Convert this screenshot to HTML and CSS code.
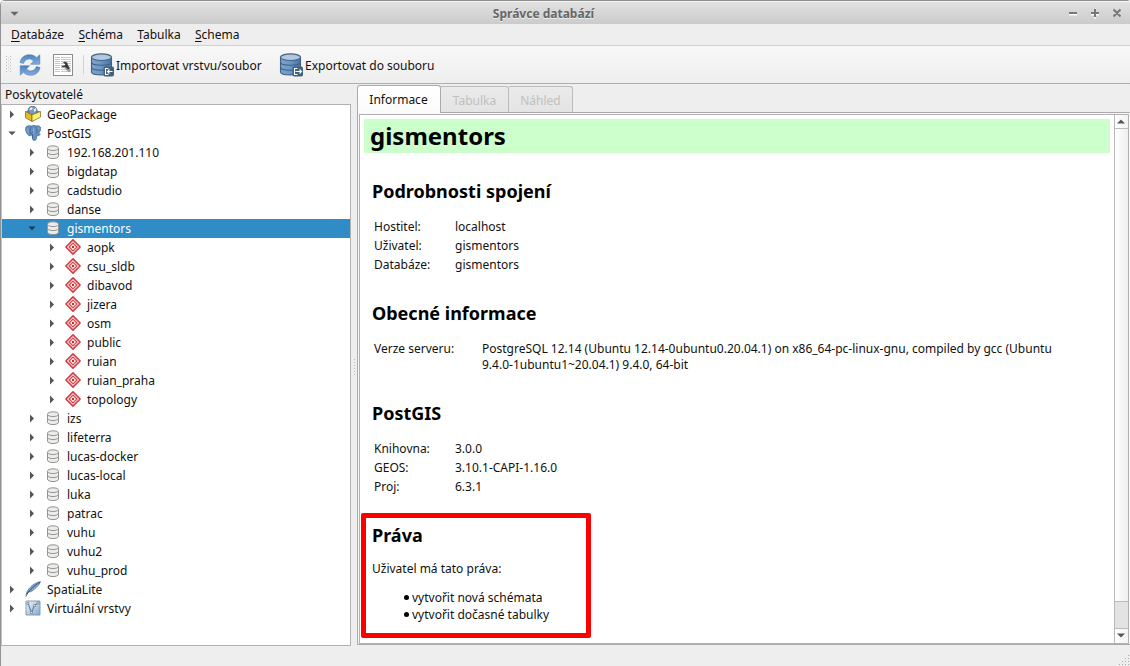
FILE: index.html
```html
<!DOCTYPE html>
<html lang="cs">
<head>
<meta charset="utf-8">
<title>Správce databází</title>
<link rel="stylesheet" href="styles.css">
</head>
<body>
<svg class="defs" width="0" height="0" aria-hidden="true">
  <defs>
    <linearGradient id="blue" x1="0" x2="1" y1="0" y2="0"><stop offset="0" stop-color="#7ba3d0"/><stop offset=".45" stop-color="#6d98c8"/><stop offset="1" stop-color="#4473a9"/></linearGradient>
    <linearGradient id="sync" x1="0" x2="0" y1="0" y2="1"><stop offset="0" stop-color="#4b82bd"/><stop offset="1" stop-color="#85aedb"/></linearGradient>
    <linearGradient id="virt" x1="0" x2="1" y1="0" y2="1"><stop offset="0" stop-color="#f2f6fa"/><stop offset="1" stop-color="#83a9ce"/></linearGradient>
  </defs>
  <symbol id="right" viewBox="0 0 8 9"><path d="M2 .5 6 4.5 2 8.5Z" fill="#555"/></symbol>
  <symbol id="down" viewBox="0 0 8 9"><path d="M.3 2.5h7.4L4 6.3Z" fill="currentColor"/></symbol>
  <symbol id="db" viewBox="0 0 16 16"><path d="M2.500 4.300c0-3.300 11-3.300 11 0v7.800c0 3.300-11 3.300-11 0Z" fill="#ececea" stroke="#939391"/><path d="M2.500 4.600c1 2.600 10 2.600 11 0M2.500 8.600c1 2.600 10 2.600 11 0" fill="none" stroke="#939391"/></symbol>
  <symbol id="schema" viewBox="0 0 16 16"><path d="M8 .9 15.100 8 8 15.100 .9 8Z" fill="#fbe9e9" stroke="#d23f43" stroke-width="1.600" stroke-linejoin="round"/><path d="M8 4.100 11.900 8 8 11.900 4.100 8Z" fill="#fff" stroke="#d7494d" stroke-width="1.300" stroke-linejoin="round"/><circle cx="8" cy="8" r="1.200" fill="#c9262c"/></symbol>
  <symbol id="gpkg" viewBox="0 0 16 16"><path d="M.5 5.500 8 3l7.500 2.500L7 9Z" fill="#a98f22"/><circle cx="7.500" cy="4.800" r="4.500" fill="#7598c0" stroke="#41566e" stroke-width=".7"/><path d="M4 3.500 6 1.200 8 2 6.300 4.300ZM8.400 3.700l2.300-1.600.7 2-1.600 2Z" fill="#e8eef1"/><path d="M.5 5.500 7 8.800v6.700L.5 11.800Z" fill="#e2bd21" stroke="#75631c" stroke-width=".7"/><path d="m7 8.800 8.500-3.300v5.600L7 15.500Z" fill="#fff06c" stroke="#75631c" stroke-width=".7"/></symbol>
  <symbol id="elephant" viewBox="0 0 16 16"><path d="M1 2C3 .2 5 1 6.300 1c2-.8 3.600-.6 5 0 2-.7 4.500.2 4.400 2.400-.1 2-1.500 4.400-2.400 5.700l2 .1c-.5 1.200-2 1.500-3.500 1.400-.3 2.200.1 4.600-2.300 4.800-2.200.1-2-2-2.200-4.500L6 9.700 5 11C2.700 10.800.5 6.500.6 4Z" fill="#6991be" stroke="#456d9a" stroke-width=".8"/><path d="M6 2C4.700 4 5.300 6.500 5 8.300 6.300 9 7.500 8 7.400 6.500M10.800 2c2 2 1.200 4.500.5 6.500M7.500 9v4" fill="none" stroke="#335a85" stroke-width=".7"/><path d="M8.500 3.300v5M2.300 3.500l1 4M12.700 2.500l1 2" stroke="#94b5d8" stroke-width=".8"/></symbol>
  <symbol id="feather" viewBox="0 0 16 16"><path d="M1.200 13.500C2 8.500 8 2 15.500.7 14 4 12 6 10 7.500 8 9.800 6 11 3.500 11Z" fill="#82aad3" stroke="#456585" stroke-width=".7"/><path d="M.8 15.500C3 10.500 8 5.500 15 1" fill="none" stroke="#2d4864" stroke-width=".9"/></symbol>
  <symbol id="virtual" viewBox="0 0 16 16"><path d="M1 1h14v14H1Z" fill="url(#virt)" stroke="#7795b4" stroke-width=".9"/><path d="M3 3.500 6.500 12.500 9.500 5.500 13 3" fill="none" stroke="#4c6277" stroke-width=".9"/><path d="M2 2.300h2v2H2zM5.500 11.500h2v2h-2zM8.500 4.500h2v2h-2zM12 2h2v2h-2z" fill="#e8edf0" stroke="#4c6277" stroke-width=".5"/></symbol>
  <symbol id="bigdb" viewBox="0 0 24 24"><path d="M1.500 4.200v14.800c0 4 20 4 20 0V4.200Z" fill="url(#blue)" stroke="#41617f" stroke-width="1.100"/><ellipse cx="11.500" cy="4.200" rx="10" ry="3.300" fill="#b3c8e0" stroke="#41617f" stroke-width="1.100"/><path d="M1.500 9.200c0 4 20 4 20 0M1.500 14.200c0 4 20 4 20 0" fill="none" stroke="#41617f" stroke-width="1.100"/><rect x="13.500" y="13.500" width="10.500" height="10" rx="1.800" fill="#41617a"/></symbol>
</svg>

<div class="window">
  <header class="titlebar">
    <svg class="window-menu" viewBox="0 0 9 6"><path d="M.5.8h8L4.500 4.800Z" fill="#666"/></svg>
    <span class="title">Správce databází</span>
    <svg class="window-buttons" viewBox="0 0 54 12"><g fill="none" stroke="#fafafa" stroke-width="2"><path d="M1 7.500h8M23 7.500h8M27 3.500v8"/></g><g fill="none" stroke="#777" stroke-width="2"><path d="M1 6h8M23 6h8M27 2v8M45.500 2.500l7 7M52.500 2.500l-7 7"/></g></svg>
  </header>

  <nav class="menubar">
    <span><u>D</u>atabáze</span><span><u>S</u>chéma</span><span><u>T</u>abulka</span><span><u>S</u>chema</span>
  </nav>

  <div class="toolbar">
    <svg class="grip" viewBox="0 0 5 17"><path d="M.5 0v17M4.500 0v17" stroke="#bbb" stroke-dasharray="1 2" fill="none"/><path d="M2.500 1.500v15" stroke="#ccc" stroke-dasharray="1 2" fill="none"/></svg>
    <svg class="refresh" viewBox="0 0 22 22"><g fill="url(#sync)" stroke="#4377b0" stroke-width=".5"><path d="M1 8.500C2 3 6 .7 10.500.7c3.500 0 5.500 1.300 7 3L20.800.8v9.500h-9.300l3-3.200C11 3.500 6 5 4.500 9.500Z"/><path d="M21 13.500c-1 5.500-5 7.800-9.500 7.800-3.500 0-5.500-1.300-7-3l-3.300 2.900v-9.500h9.300l-3 3.200c3.500 3.600 8.500 2.100 10-2.400Z"/></g></svg>
    <svg class="sql" viewBox="0 0 20 22"><rect x=".5" y=".5" width="19" height="21" fill="#fff" stroke="#8c8c8c"/><path d="M2 3.500h5M8 3.500h10M2 5.500h5M8 5.500h10M2 7.500h5M8 7.500h10M2 9.500h5M8 9.500h10M2 11.500h5M8 11.500h10M2 13.500h5M8 13.500h10M2 15.500h5M8 15.500h10M2 17.500h5M8 17.500h10" stroke="#c7c7c7"/><path d="M12.500 13.500 17 17.500" stroke="#999" stroke-width="2.500"/><path d="M10 8.300c2-1.300 5-.1 4.800 2.400l2.200 3.800-2 .8-2.700-2.200c-1.800.6-3.500.2-4-1.300h3l1-1.600Z" fill="#3b3b3b"/></svg>
    <i class="separator"></i>
    <div class="tool import">
      <svg viewBox="0 0 24 24"><use href="#bigdb"/><path d="M18.500 15.500h-3v6h3M22.500 18.500h-5M19.500 16.500l-2 2 2 2" fill="none" stroke="#fff" stroke-width="1.100"/></svg>
      <span>Importovat vrstvu/soubor</span>
    </div>
    <div class="tool export">
      <svg viewBox="0 0 24 24"><use href="#bigdb"/><path d="M18.500 15.500h-3v6h3M16.500 18.500h6M20.500 16.500l2 2-2 2" fill="none" stroke="#fff" stroke-width="1.100"/></svg>
      <span>Exportovat do souboru</span>
    </div>
  </div>

  <main class="workspace">
    <section class="providers">
      <div class="panel-title">Poskytovatelé</div>
      <div class="tree">
        <div class="row"><svg class="arrow"><use href="#right"/></svg><svg class="icon"><use href="#gpkg"/></svg><span>GeoPackage</span></div>
        <div class="row"><svg class="arrow"><use href="#down"/></svg><svg class="icon"><use href="#elephant"/></svg><span>PostGIS</span></div>
        <div class="row connection"><svg class="arrow"><use href="#right"/></svg><svg class="icon"><use href="#db"/></svg><span>192.168.201.110</span></div>
        <div class="row connection"><svg class="arrow"><use href="#right"/></svg><svg class="icon"><use href="#db"/></svg><span>bigdatap</span></div>
        <div class="row connection"><svg class="arrow"><use href="#right"/></svg><svg class="icon"><use href="#db"/></svg><span>cadstudio</span></div>
        <div class="row connection"><svg class="arrow"><use href="#right"/></svg><svg class="icon"><use href="#db"/></svg><span>danse</span></div>
        <div class="row connection selected"><svg class="arrow"><use href="#down"/></svg><svg class="icon"><use href="#db"/></svg><span>gismentors</span></div>
        <div class="row schema"><svg class="arrow"><use href="#right"/></svg><svg class="icon"><use href="#schema"/></svg><span>aopk</span></div>
        <div class="row schema"><svg class="arrow"><use href="#right"/></svg><svg class="icon"><use href="#schema"/></svg><span>csu_sldb</span></div>
        <div class="row schema"><svg class="arrow"><use href="#right"/></svg><svg class="icon"><use href="#schema"/></svg><span>dibavod</span></div>
        <div class="row schema"><svg class="arrow"><use href="#right"/></svg><svg class="icon"><use href="#schema"/></svg><span>jizera</span></div>
        <div class="row schema"><svg class="arrow"><use href="#right"/></svg><svg class="icon"><use href="#schema"/></svg><span>osm</span></div>
        <div class="row schema"><svg class="arrow"><use href="#right"/></svg><svg class="icon"><use href="#schema"/></svg><span>public</span></div>
        <div class="row schema"><svg class="arrow"><use href="#right"/></svg><svg class="icon"><use href="#schema"/></svg><span>ruian</span></div>
        <div class="row schema"><svg class="arrow"><use href="#right"/></svg><svg class="icon"><use href="#schema"/></svg><span>ruian_praha</span></div>
        <div class="row schema"><svg class="arrow"><use href="#right"/></svg><svg class="icon"><use href="#schema"/></svg><span>topology</span></div>
        <div class="row connection"><svg class="arrow"><use href="#right"/></svg><svg class="icon"><use href="#db"/></svg><span>izs</span></div>
        <div class="row connection"><svg class="arrow"><use href="#right"/></svg><svg class="icon"><use href="#db"/></svg><span>lifeterra</span></div>
        <div class="row connection"><svg class="arrow"><use href="#right"/></svg><svg class="icon"><use href="#db"/></svg><span>lucas-docker</span></div>
        <div class="row connection"><svg class="arrow"><use href="#right"/></svg><svg class="icon"><use href="#db"/></svg><span>lucas-local</span></div>
        <div class="row connection"><svg class="arrow"><use href="#right"/></svg><svg class="icon"><use href="#db"/></svg><span>luka</span></div>
        <div class="row connection"><svg class="arrow"><use href="#right"/></svg><svg class="icon"><use href="#db"/></svg><span>patrac</span></div>
        <div class="row connection"><svg class="arrow"><use href="#right"/></svg><svg class="icon"><use href="#db"/></svg><span>vuhu</span></div>
        <div class="row connection"><svg class="arrow"><use href="#right"/></svg><svg class="icon"><use href="#db"/></svg><span>vuhu2</span></div>
        <div class="row connection"><svg class="arrow"><use href="#right"/></svg><svg class="icon"><use href="#db"/></svg><span>vuhu_prod</span></div>
        <div class="row"><svg class="arrow"><use href="#right"/></svg><svg class="icon"><use href="#feather"/></svg><span>SpatiaLite</span></div>
        <div class="row"><svg class="arrow"><use href="#right"/></svg><svg class="icon"><use href="#virtual"/></svg><span>Virtuální vrstvy</span></div>
      </div>
    </section>

    <div class="splitter"><i></i></div>

    <section class="details">
      <div class="tabs">
        <div class="tab active">Informace</div><div class="tab">Tabulka</div><div class="tab last">Náhled</div>
      </div>
      <div class="pane">
        <div class="browser">
          <article class="info">
            <h1>gismentors</h1>
            <h2>Podrobnosti spojení</h2>
            <dl class="connection-info">
              <dt>Hostitel:</dt><dd>localhost</dd>
              <dt>Uživatel:</dt><dd>gismentors</dd>
              <dt>Databáze:</dt><dd>gismentors</dd>
            </dl>
            <h2>Obecné informace</h2>
            <dl class="server-info">
              <dt>Verze serveru:</dt><dd>PostgreSQL 12.14 (Ubuntu 12.14-0ubuntu0.20.04.1) on x86_64-pc-linux-gnu, compiled by gcc (Ubuntu<br>9.4.0-1ubuntu1~20.04.1) 9.4.0, 64-bit</dd>
            </dl>
            <h2>PostGIS</h2>
            <dl class="postgis-info">
              <dt>Knihovna:</dt><dd>3.0.0</dd>
              <dt>GEOS:</dt><dd>3.10.1-CAPI-1.16.0</dd>
              <dt>Proj:</dt><dd>6.3.1</dd>
            </dl>
            <h2>Práva</h2>
            <p>Uživatel má tato práva:</p>
            <ul><li>vytvořit nová schémata</li><li>vytvořit dočasné tabulky</li></ul>
            <div class="highlight"></div>
          </article>
          <div class="scrollbar">
            <div class="scroll-button"><svg viewBox="0 0 8 5"><path d="M0 4.500h8L4 .5Z" fill="#555"/></svg></div>
            <div class="track"></div>
            <div class="thumb"></div>
            <div class="scroll-button bottom"><svg viewBox="0 0 8 5"><path d="M0 .5h8L4 4.500Z" fill="#555"/></svg></div>
          </div>
        </div>
      </div>
    </section>
  </main>

  <footer class="statusbar">
    <svg class="resize" viewBox="0 0 12 12"><path d="M10 1h1v1h-1zM7 4h1v1H7zM10 4h1v1h-1zM4 7h1v1H4zM7 7h1v1H7zM10 7h1v1h-1zM1 10h1v1H1zM4 10h1v1H4zM7 10h1v1H7zM10 10h1v1h-1z" fill="#aaa"/></svg>
  </footer>
</div>
</body>
</html>
```

FILE: styles.css
```css
* { box-sizing: border-box; }
body { margin: 0; background: #fff; }
.defs { display: block; height: 0; }
svg { flex: none; }

.window {
  width: 1130px;
  height: 666px;
  display: flex;
  flex-direction: column;
  overflow: hidden;
  background: #eee;
  border-left: 1px solid #929292;
  border-top-left-radius: 5px;
  border-top-right-radius: 3px;
  font: 12px/19px "Noto Sans", sans-serif;
  color: #111;
}

.titlebar {
  height: 24px;
  flex: none;
  display: grid;
  grid-template-columns: 36px 1fr 80px;
  align-items: center;
  border-top: 1px solid #8f8f8f;
  box-shadow: inset 0 1px #f4f4f4;
  background: linear-gradient(#e2e2e2, #cbcbcb);
}
.window-menu { width: 9px; height: 6px; margin: 2px 0 0 9px; }
.title { padding-top: 2px; text-align: center; font-weight: 700; color: #666; text-shadow: 0 1px #eee; }
.window-buttons { width: 54px; height: 12px; margin: 1px 0 0 18px; }

.menubar {
  height: 21px;
  flex: none;
  display: flex;
  gap: 14.3px;
  padding: 1px 0 0 10px;
}
.menubar u { text-underline-offset: 2px; }

.toolbar {
  height: 39px;
  flex: none;
  display: flex;
  align-items: center;
  border-top: 1px solid #d0d0d0;
  border-bottom: 1px solid #adadad;
  background: linear-gradient(#f8f8f8, #eee);
}
.grip { width: 5px; height: 17px; margin-left: 5px; }
.refresh { width: 22px; height: 22px; margin-left: 8px; }
.sql { width: 20px; height: 22px; margin-left: 12px; }
.separator { width: 1px; height: 19px; margin-left: 10px; background: #d2d2d2; }
.tool { display: flex; align-items: center; }
.tool svg { width: 24px; height: 24px; }
.import { width: 189px; margin-left: 6px; }
.tool span { margin-left: 2px; padding-top: 1px; }

.workspace { flex: none; height: 562px; display: flex; }
.providers { width: 350px; padding-top: 1px; display: flex; flex-direction: column; }
.panel-title { height: 19px; padding-left: 4px; }
.tree { height: 542px; border: 1px solid #b1b1b1; border-left-color: #c4c4c4; background: #fff; }
.row { height: 19px; display: flex; align-items: center; padding-left: 6px; }
.row.connection { padding-left: 26px; }
.row.schema { padding-left: 46px; }
.arrow { width: 8px; height: 9px; color: #555; }
.icon { width: 16px; height: 16px; margin: 0 6px 1px 9px; }
.row.selected { background: #308cc6; color: #fff; }
.selected .arrow { color: #173b54; }

.splitter { width: 6px; flex: none; display: flex; align-items: center; justify-content: center; }
.splitter i { width: 1px; height: 16px; margin-top: 3px; background: repeating-linear-gradient(#b5b5b5 0 1px, transparent 1px 3px); }

.details { flex: 1; display: flex; flex-direction: column; padding-top: 1px; }
.tabs { height: 27px; display: flex; align-items: flex-end; }
.tab {
  height: 26px;
  width: 68px;
  line-height: 26px;
  padding-top: 1px;
  text-align: center;
  border: 1px solid #bcbcbc;
  border-left: 0;
  border-bottom: 0;
  border-top-right-radius: 3px;
  background: linear-gradient(#eaeaea, #e4e4e4);
  color: #c0c0c0;
}
.tab.last { width: 64px; }
.tab.active {
  width: 84px;
  height: 28px;
  margin-bottom: -1px;
  padding-right: 1px;
  position: relative;
  border-left: 1px solid #aaa;
  border-color: #aaa;
  border-radius: 3px 3px 0 0;
  background: linear-gradient(#fff, #fbfbfb);
  color: #111;
}
.pane { height: 533px; padding: 1px 1px 0; border: 1px solid #aaa; border-right: 0; background: #f8f8f8; }
.browser { height: 530px; display: flex; border: 1px solid #b1b1b1; background: #fff; }
.info { flex: 1; padding: 4px 4px 0; position: relative; }
h1 { margin: 0; height: 34px; padding-left: 6px; background: #cfc; font-size: 24px; line-height: 34px; color: #000; }
h2 { margin: 27px 0 14px 8px; font-size: 18px; line-height: 24px; color: #000; }
h1 + h2 { margin-top: 26px; }
dl { margin: 0 0 0 10px; display: grid; color: #111; }
dd { margin: 0; }
.connection-info { grid-template-columns: 81px 1fr; }
.server-info { grid-template-columns: 108px 1fr; line-height: 16px; padding-top: 2px; height: 35px; }
.postgis-info { grid-template-columns: 81px 1fr; }
p { margin: -2px 0 0 8px; }
ul { margin: 11px 0 0; padding-left: 48px; list-style: none; line-height: 17px; }
li { display: flex; align-items: center; }
li::before { content: ""; width: 5px; height: 5px; margin: -1px 3px 0 -8px; border-radius: 50%; background: #000; }
.highlight { position: absolute; left: 1px; top: 398px; width: 230px; height: 125px; border: 5px solid #f00; border-radius: 2px; }

.scrollbar { width: 14px; display: flex; flex-direction: column; border-left: 1px solid #b8b8b8; }
.scroll-button { height: 14px; display: flex; align-items: center; justify-content: center; border-bottom: 1px solid #bbb; background: linear-gradient(90deg, #fff, #f2f2f2); }
.scroll-button svg { width: 8px; height: 5px; margin: 0 1px 1px 0; }
.scroll-button.bottom { border-bottom: 0; }
.track { flex: 1; background: linear-gradient(90deg, #fff, #efefef); }
.thumb { height: 28px; border-top: 1px solid #bbb; border-bottom: 1px solid #bbb; background: #e3e3e3; }

.statusbar { flex: 1; display: flex; justify-content: flex-end; align-items: flex-end; }
.resize { width: 12px; height: 12px; }
```
